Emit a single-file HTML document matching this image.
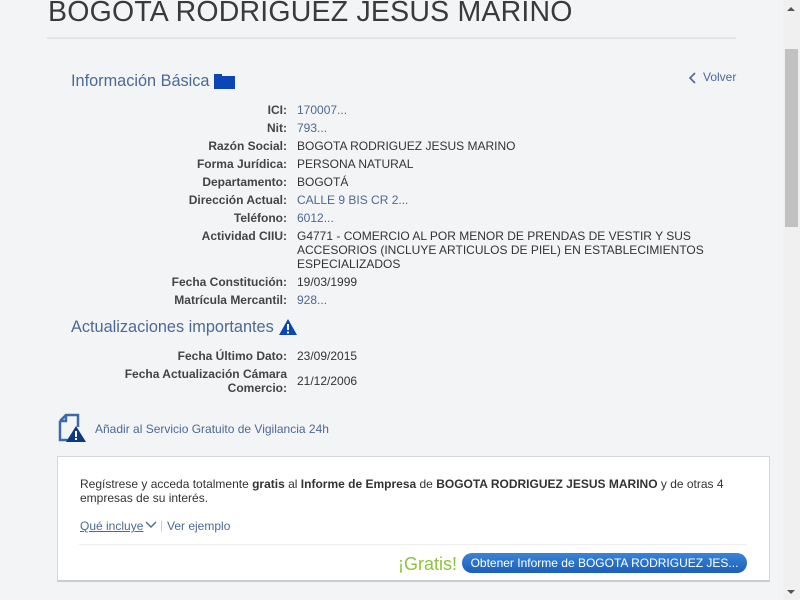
<!DOCTYPE html>
<html><head><meta charset="utf-8"><style>
body{margin:0;width:800px;height:600px;overflow:hidden;background:#f3f4f6;font-family:"Liberation Sans",sans-serif;position:relative}
.a{position:absolute;white-space:nowrap}
h1{position:absolute;left:48px;top:-4px;margin:0;font-weight:normal;font-size:28.5px;color:#3a3a3a;letter-spacing:0.2px}
.hr{position:absolute;left:47px;top:37px;width:689px;height:2px;background:#e3e4e7}
.sec{font-size:16.3px;color:#4a6a96}
.l{position:absolute;right:513px;font-size:12px;font-weight:bold;color:#444;text-align:right;white-space:nowrap;line-height:14px}
.v{position:absolute;left:297px;font-size:12px;color:#333;line-height:14px;white-space:nowrap}
.lk{color:#4a6a96}
.sb{position:absolute;left:783px;top:0;width:17px;height:600px;background:#f0f0f0}
</style></head><body>
<h1>BOGOTA RODRIGUEZ JESUS MARINO</h1>
<div class="hr"></div>
<div class="a sec" style="left:71px;top:72px">Información Básica</div>
<div class="a" style="left:214px;top:76px;width:21px;height:13px;background:#0a46b5"></div>
<div class="a" style="left:214px;top:74px;width:8px;height:4px;background:#0a46b5"></div>
<svg class="a" style="left:688px;top:71px" width="10" height="14"><path d="M7 2 L2 7 L7 12" stroke="#4a6a96" stroke-width="1.6" fill="none"/></svg>
<div class="a lk" style="left:703px;top:70px;font-size:12px">Volver</div>

<div class="l" style="top:103px">ICI:</div><div class="v lk" style="top:103px">170007...</div>
<div class="l" style="top:121px">Nit:</div><div class="v lk" style="top:121px">793...</div>
<div class="l" style="top:139px">Razón Social:</div><div class="v" style="top:139px">BOGOTA RODRIGUEZ JESUS MARINO</div>
<div class="l" style="top:157px">Forma Jurídica:</div><div class="v" style="top:157px">PERSONA NATURAL</div>
<div class="l" style="top:175px">Departamento:</div><div class="v" style="top:175px">BOGOTÁ</div>
<div class="l" style="top:193px">Dirección Actual:</div><div class="v lk" style="top:193px">CALLE 9 BIS CR 2...</div>
<div class="l" style="top:211px">Teléfono:</div><div class="v lk" style="top:211px">6012...</div>
<div class="l" style="top:229px">Actividad CIIU:</div><div class="v" style="top:229px">G4771 - COMERCIO AL POR MENOR DE PRENDAS DE VESTIR Y SUS<br>ACCESORIOS (INCLUYE ARTICULOS DE PIEL) EN ESTABLECIMIENTOS<br>ESPECIALIZADOS</div>
<div class="l" style="top:275px">Fecha Constitución:</div><div class="v" style="top:275px">19/03/1999</div>
<div class="l" style="top:293px">Matrícula Mercantil:</div><div class="v lk" style="top:293px">928...</div>

<div class="a sec" style="left:71px;top:318px">Actualizaciones importantes</div>
<svg class="a" style="left:278px;top:318px" width="20" height="18"><path d="M10 1 L19 17 L1 17 Z" fill="#0a46b5"/><rect x="9" y="6" width="2" height="6" fill="#fff"/><rect x="9" y="13.5" width="2" height="2" fill="#fff"/></svg>
<div class="l" style="top:349px">Fecha Último Dato:</div><div class="v" style="top:349px">23/09/2015</div>
<div class="l" style="top:367px">Fecha Actualización Cámara<br>Comercio:</div><div class="v" style="top:374px">21/12/2006</div>

<svg class="a" style="left:56px;top:413px" width="32" height="30"><path d="M4 8 L10 2 L22 2 L22 14 M4 8 L4 27 L14 27 M4 8 L10 8 L10 2" stroke="#3d6aa6" stroke-width="2.5" fill="none"/><path d="M20 13 L30 29 L10 29 Z" fill="#0c3a80"/><rect x="19" y="18" width="2" height="6" fill="#fff"/><rect x="19" y="25" width="2" height="2" fill="#fff"/></svg>
<div class="a lk" style="left:95px;top:422px;font-size:12px">Añadir al Servicio Gratuito de Vigilancia 24h</div>

<div class="a" style="left:57px;top:456px;width:711px;height:123px;background:#fff;border:1px solid #d6d7da;border-bottom:2px solid #ccc"></div>
<div class="a" style="left:80px;top:477px;font-size:12px;color:#333;line-height:14px">Regístrese y acceda totalmente <b>gratis</b> al <b>Informe de Empresa</b> de <b>BOGOTA RODRIGUEZ JESUS MARINO</b> y de otras 4<br>empresas de su interés.</div>
<div class="a lk" style="left:80px;top:519px;font-size:12px"><u>Qué incluye</u></div>
<svg class="a" style="left:145px;top:521px" width="12" height="8"><path d="M1 1 L6 6 L11 1" stroke="#4a6a96" stroke-width="1.4" fill="none"/></svg>
<div class="a" style="left:160px;top:518px;font-size:12px;color:#ccc">|</div>
<div class="a lk" style="left:167px;top:519px;font-size:12px">Ver ejemplo</div>
<div class="a" style="left:79px;top:544px;width:667px;height:1px;background:#eee"></div>
<div class="a" style="left:398px;top:554px;font-size:18px;color:#8cc43c">¡Gratis!</div>
<div class="a" style="left:462px;top:553px;width:285px;height:20px;border-radius:10px;background:linear-gradient(#3a84d6,#1b5fb8);color:#fff;font-size:12px;line-height:20px;text-align:center">Obtener Informe de BOGOTA RODRIGUEZ JES...</div>

<div class="sb"></div>
<div class="a" style="left:785px;top:49px;width:13px;height:178px;background:#c1c1c1"></div>
<svg class="a" style="left:786px;top:5px" width="10" height="8"><path d="M1 6 L5 2 L9 6 Z" fill="#555"/></svg>
<svg class="a" style="left:786px;top:588px" width="10" height="8"><path d="M1 2 L5 6 L9 2 Z" fill="#555"/></svg>
</body></html>
